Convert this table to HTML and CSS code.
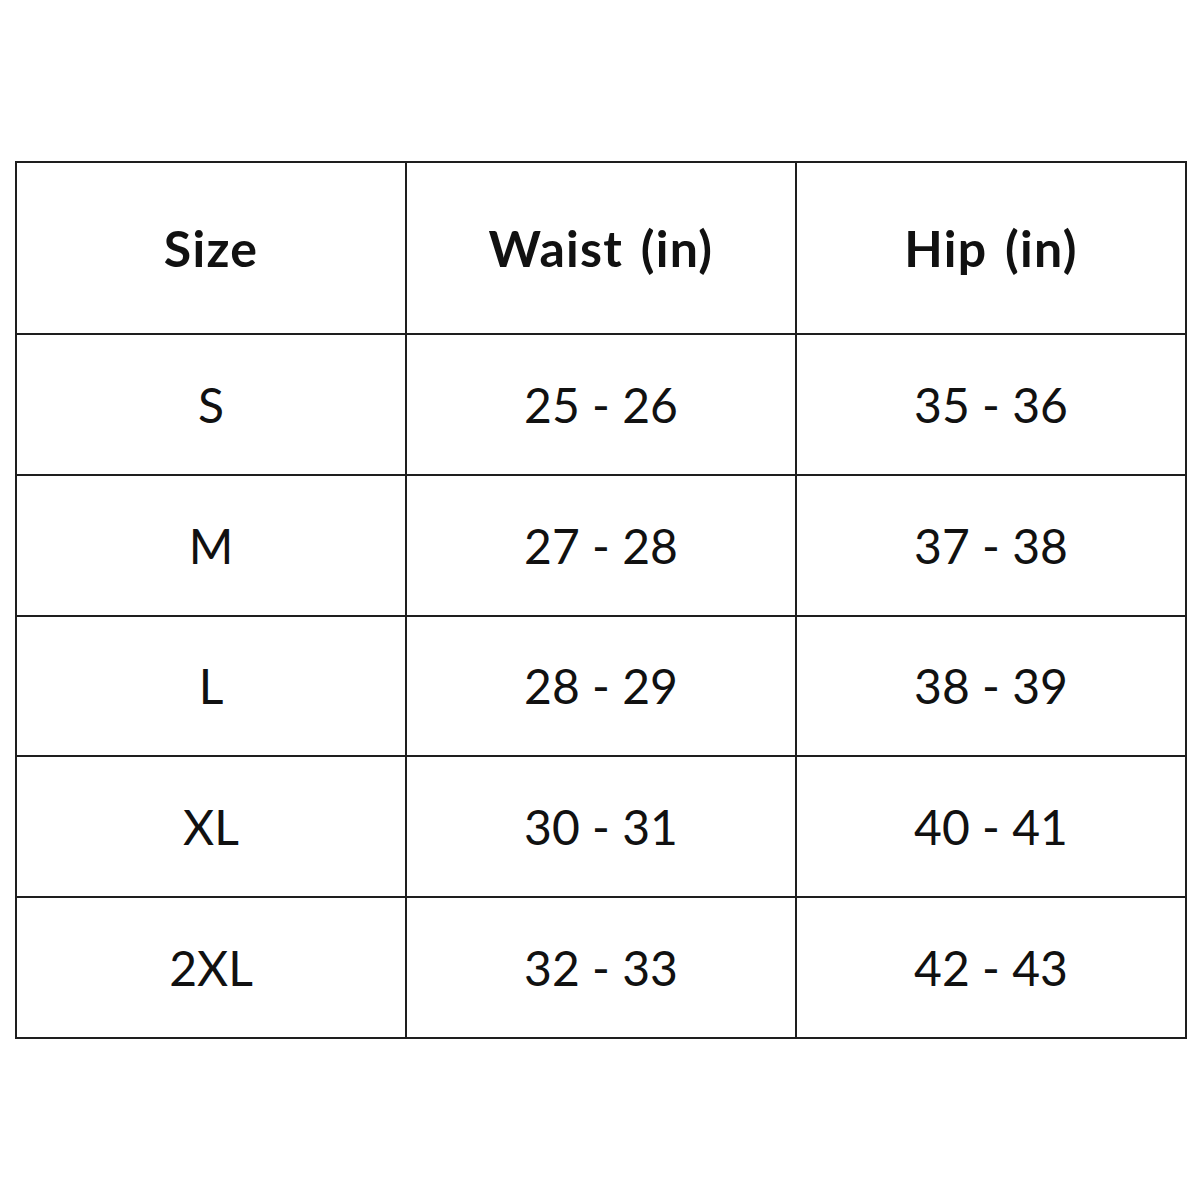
FILE: index.html
```html
<!DOCTYPE html>
<html>
<head>
<meta charset="utf-8">
<link rel="stylesheet" href="styles.css">
</head>
<body>
<div class="page">
  <table class="chart">
    <thead>
      <tr><th>Size</th><th>Waist (in)</th><th>Hip (in)</th></tr>
    </thead>
    <tbody>
      <tr><td>S</td><td>25 - 26</td><td>35 - 36</td></tr>
      <tr><td>M</td><td>27 - 28</td><td>37 - 38</td></tr>
      <tr><td>L</td><td>28 - 29</td><td>38 - 39</td></tr>
      <tr><td>XL</td><td>30 - 31</td><td>40 - 41</td></tr>
      <tr><td>2XL</td><td>32 - 33</td><td>42 - 43</td></tr>
    </tbody>
  </table>
</div>
</body>
</html>
```
FILE: styles.css
```css
html, body {
  margin: 0;
  padding: 0;
  background: #ffffff;
}
.page {
  width: 1200px;
  height: 1200px;
  padding: 161px 0 0 15px;
  box-sizing: border-box;
}
.chart {
  border-collapse: collapse;
  width: 1172px;
  table-layout: fixed;
  font-family: Lato, "Open Sans", sans-serif;
  color: #111111;
}
.chart th,
.chart td {
  border: 2px solid #1e1e1e;
  text-align: center;
  vertical-align: middle;
  padding: 0;
}
.chart th {
  height: 170px;
  font-weight: 700;
  font-size: 50px;
  letter-spacing: 1.3px;
  word-spacing: 4px;
}
.chart td {
  height: 138.8px;
  font-weight: 400;
  font-size: 48px;
}
```
